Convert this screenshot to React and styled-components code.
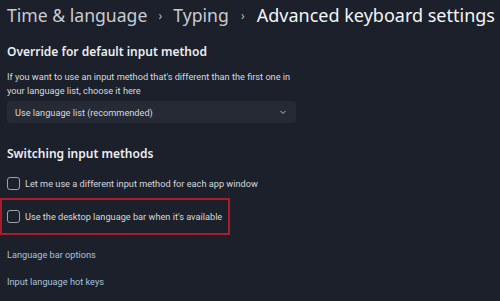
import React from 'react';
import styled, { createGlobalStyle } from 'styled-components';

const GlobalStyle = createGlobalStyle`
  body {
    margin: 0;
    background: #1b202b;
    font-family: "Noto Sans", "Open Sans", sans-serif;
  }
`;

const Page = styled.div`
  width: 500px;
  height: 301px;
  overflow: hidden;
  box-sizing: border-box;
  padding: 2px 0 0 7px;
  background: #1b202b;
  color: #e6e8eb;
`;

const Breadcrumb = styled.div`
  display: flex;
  align-items: center;
  height: 26px;
  white-space: nowrap;
`;

const Crumb = styled.span`
  font-size: ${({ current }) => (current ? '18px' : '17.6px')};
  color: ${({ current }) => (current ? '#f4f5f7' : '#c9ccd2')};
`;

const Sep = styled.span`
  color: #b9bcc3;
  font-size: 12px;
  width: ${({ w }) => w}px;
  display: flex;
  justify-content: center;
`;

const SectionTitle = styled.h2`
  margin: 0;
  font-size: 12px;
  font-weight: 600;
  color: #eceef1;
  line-height: 18px;
  margin-top: ${({ top }) => top}px;
`;

const Body = styled.div`
  font-family: Roboto, "Noto Sans", sans-serif;
  font-size: 9.2px;
  color: #d6d9de;
`;

const Desc = styled(Body)`
  margin-top: 9px;
  line-height: 14px;
  width: 290px;
`;

const Select = styled(Body)`
  margin-top: 3px;
  width: 289px;
  height: 22px;
  box-sizing: border-box;
  padding: 0 9px 0 8px;
  display: flex;
  align-items: center;
  justify-content: space-between;
  background: #252a35;
  border-radius: 3px;
`;

const Row = styled(Body)`
  display: flex;
  align-items: center;
  gap: 5px;
  height: 18px;
  margin-top: ${({ top }) => top || 0}px;
`;

const Box = styled.span`
  width: 13px;
  height: 13px;
  box-sizing: border-box;
  border: 1px solid #9ea3ab;
  border-radius: 3px;
  flex: none;
`;

const Highlight = styled.div`
  margin: 6px 0 0 -7px;
  width: 230px;
  height: 37px;
  box-sizing: border-box;
  border: 2px solid #a91d2c;
  padding-left: 5px;
  display: flex;
  align-items: center;
`;

const LinkText = styled(Body)`
  line-height: 14px;
  color: #a9c2dc;
  margin-top: ${({ top }) => top}px;
`;

const Chevron = () => (
  <svg width="8" height="8" viewBox="0 0 8 8">
    <path d="M1.5 3 L4 5.5 L6.5 3" stroke="#b8bcc4" strokeWidth="1" fill="none" />
  </svg>
);

export default function App() {
  return (
    <Page>
      <GlobalStyle />
      <Breadcrumb>
        <Crumb>Time &amp; language</Crumb>
        <Sep w={26}>›</Sep>
        <Crumb>Typing</Crumb>
        <Sep w={28}>›</Sep>
        <Crumb current>Advanced keyboard settings</Crumb>
      </Breadcrumb>

      <SectionTitle top={15}>Override for default input method</SectionTitle>
      <Desc>
        If you want to use an input method that's different than the first one in your language list, choose it here
      </Desc>
      <Select>
        <span>Use language list (recommended)</span>
        <Chevron />
      </Select>

      <SectionTitle top={22}>Switching input methods</SectionTitle>
      <Row top={11}>
        <Box />
        Let me use a different input method for each app window
      </Row>
      <Highlight>
        <Row>
          <Box />
          Use the desktop language bar when it's available
        </Row>
      </Highlight>
      <LinkText top={13}>Language bar options</LinkText>
      <LinkText top={13}>Input language hot keys</LinkText>
    </Page>
  );
}
